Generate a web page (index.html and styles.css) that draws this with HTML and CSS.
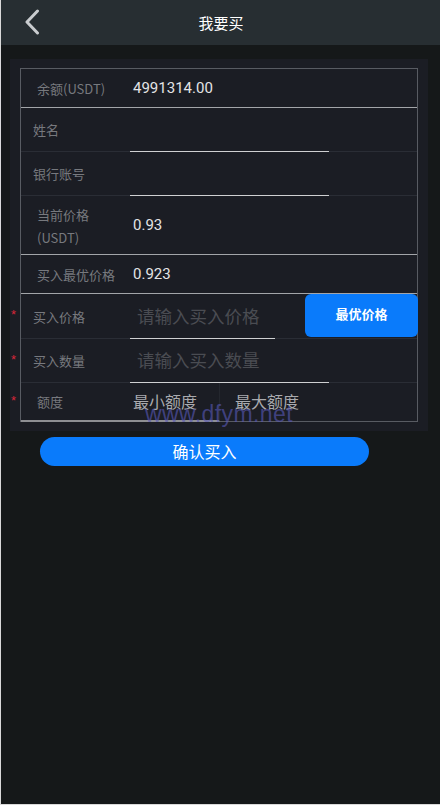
FILE: index.html
```html
<!DOCTYPE html>
<html lang="zh">
<head>
<meta charset="utf-8">
<title>我要买</title>
<link rel="stylesheet" href="styles.css">
</head>
<body>
<div class="page">
  <header class="topbar">
    <span class="back">
      <svg width="16" height="26" viewBox="0 0 16 26"><path d="M13.5 2 L3 13 L13.5 24" fill="none" stroke="#c9cccf" stroke-width="3" stroke-linecap="round" stroke-linejoin="round"/></svg>
    </span>
    <h1 class="title">我要买</h1>
  </header>

  <main class="main">
    <section class="card">
      <div class="table">
        <div class="row row-info h39 bright">
          <div class="label pl17">余额(USDT)</div>
          <div class="value">4991314.00</div>
        </div>
        <div class="row h44 dim">
          <div class="label pl13">姓名</div>
          <div class="field w199"></div>
        </div>
        <div class="row h44 dim">
          <div class="label pl13">银行账号</div>
          <div class="field w199"></div>
        </div>
        <div class="row h59 bright">
          <div class="label pl17 two">当前价格<br>(USDT)</div>
          <div class="value">0.93</div>
        </div>
        <div class="row h39 bright">
          <div class="label pl17">买入最优价格</div>
          <div class="value">0.923</div>
        </div>
        <div class="row h45 dim">
          <span class="req">*</span>
          <div class="label pl13">买入价格</div>
          <div class="field w145"><span class="ph">请输入买入价格</span></div>
          <button class="best">最优价格</button>
        </div>
        <div class="row h44 dim">
          <span class="req">*</span>
          <div class="label pl13">买入数量</div>
          <div class="field w199"><span class="ph">请输入买入数量</span></div>
        </div>
        <div class="row h38 last">
          <span class="req">*</span>
          <div class="label pl17">额度</div>
          <div class="limit first"><span class="lt">最小额度</span></div>
          <div class="limit second"><span class="lt">最大额度</span></div>
          <span class="watermark">www.dfym.net</span>
        </div>
      </div>
    </section>
    <button class="confirm">确认买入</button>
  </main>
</div>
</body>
</html>
```

FILE: styles.css
```css
html, body {
  margin: 0;
  padding: 0;
  background: #151819;
}
body {
  font-family: Roboto, "Noto Sans CJK SC", sans-serif;
}
.page {
  box-sizing: border-box;
  width: 440px;
  min-height: 805px;
  background: #151819;
  border-left: 1px solid #d9d9d9;
  border-bottom: 1px solid #d9d9d9;
}
.topbar {
  height: 45px;
  background: #272e32;
  display: flex;
  align-items: center;
  justify-content: center;
  position: relative;
}
.back {
  position: absolute;
  left: 23px;
  top: 9px;
  display: block;
  width: 16px;
  height: 26px;
}
.back svg { display: block; }
.title {
  margin: 0;
  font-size: 15px;
  font-weight: normal;
  color: #ffffff;
  font-family: "Noto Sans CJK SC", sans-serif;
  padding-left: 1px;
}
.main {
  padding-top: 14px;
}
.card {
  margin: 0 12px 0 9px;
  padding: 9px 10px 9px 10px;
  background: #1b1d24;
}
.table {
  border: 1px solid #585b62;
  display: flex;
  flex-direction: column;
}
.row {
  box-sizing: border-box;
  display: flex;
  align-items: center;
  position: relative;
}
.h38 { height: 38px; }
.h39 { height: 39px; }
.h44 { height: 44px; }
.h45 { height: 45px; }
.h59 { height: 59px; }
.bright { border-bottom: 1px solid #a3a5a9; }
.dim { border-bottom: 1px solid #2a2d35; }
.label {
  box-sizing: border-box;
  width: 109px;
  flex: none;
  font-size: 13px;
  color: #77797e;
  font-family: "Noto Sans CJK SC", sans-serif;
}
.pl17 { padding-left: 16px; }
.pl13 { padding-left: 12px; }
.label.two { line-height: 23px; padding-top: 1px; }
.value {
  padding-left: 3px;
  font-size: 15px;
  color: #e4e4e6;
  font-family: Roboto, "Noto Sans CJK SC", sans-serif;
}
.field {
  box-sizing: border-box;
  height: 100%;
  border-bottom: 1px solid #cfd0d2;
  display: flex;
  align-items: center;
  padding-left: 7px;
  margin-bottom: -1px;
  position: relative;
  z-index: 1;
}
.w199 { width: 199px; }
.w145 { width: 145px; }
.ph {
  font-size: 17.5px;
  color: #4a4c52;
  white-space: nowrap;
  font-family: "Noto Sans CJK SC", sans-serif;
  padding-bottom: 2px;
}
.req {
  position: absolute;
  left: -10px;
  top: 50%;
  margin-top: -9px;
  color: #d8263a;
  font-size: 13px;
  font-family: "Liberation Sans", sans-serif;
}
.best {
  margin-left: auto;
  margin-right: -1px;
  align-self: flex-start;
  margin-top: 0;
  width: 113px;
  height: 43px;
  border: none;
  border-radius: 6px;
  background: #0a7bfb;
  color: #ffffff;
  font-size: 13px;
  font-weight: bold;
  font-family: "Noto Sans CJK SC", sans-serif;
  padding: 0 0 4px 0;
}
.last {
  align-items: stretch;
}
.last .label {
  display: flex;
  align-items: center;
  border-bottom: 2px solid #8e8f93;
  margin-bottom: -1px;
}
.limit {
  display: flex;
  align-items: center;
  font-size: 16px;
  color: #a9aaae;
  font-family: "Noto Sans CJK SC", sans-serif;
}
.lt {
  line-height: 16px;
  margin-top: -2px;
}
.limit.first {
  box-sizing: border-box;
  width: 90px;
  padding-left: 3px;
  border-right: 1px solid #24272e;
  border-bottom: 2px solid #8e8f93;
  margin-bottom: -1px;
}
.limit.second {
  padding-left: 15px;
}
.watermark {
  position: absolute;
  left: 124px;
  top: 25px;
  font-family: "Liberation Sans", sans-serif;
  font-size: 23px;
  line-height: 12px;
  letter-spacing: 0.4px;
  color: rgba(88, 88, 185, 0.62);
  pointer-events: none;
  white-space: nowrap;
}
.confirm {
  display: block;
  margin: 6px 0 0 39px;
  width: 329px;
  height: 29px;
  border: none;
  border-radius: 15px;
  background: #0a7bfb;
  color: #ffffff;
  font-size: 16px;
  font-family: "Noto Sans CJK SC", sans-serif;
  padding: 0 0 2px 0;
}
```
